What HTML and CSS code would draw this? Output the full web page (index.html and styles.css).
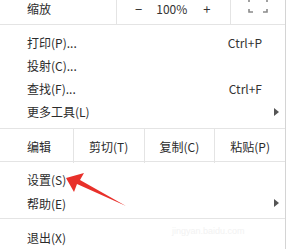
FILE: index.html
```html
<!DOCTYPE html>
<html lang="zh-CN">
<head>
<meta charset="utf-8">
<link rel="stylesheet" href="styles.css">
</head>
<body>
<div class="menu">
  <div class="zoom-row">
    <span class="zoom-label">缩放</span>
    <div class="zoom-ctrl">
      <span class="zbtn minus">−</span>
      <span class="zval">100%</span>
      <span class="zbtn plus">+</span>
    </div>
    <div class="zoom-full">
      <svg width="20" height="16" viewBox="0 0 20 16">
        <path d="M1 4V1h4M15 1h4v3M19 11v3h-4M5 14H1v-3" fill="none" stroke="#8a8a8a" stroke-width="1.6"/>
      </svg>
    </div>
  </div>
  <div class="group top">
    <div class="item"><span>打印(P)...</span><span class="key">Ctrl+P</span></div>
    <div class="item"><span>投射(C)...</span></div>
    <div class="item"><span>查找(F)...</span><span class="key">Ctrl+F</span></div>
    <div class="item"><span>更多工具(L)</span><span class="sub"></span></div>
  </div>
  <div class="edit-row">
    <span class="edit-label">编辑</span>
    <span class="ebtn">剪切(T)</span>
    <span class="ebtn">复制(C)</span>
    <span class="ebtn">粘贴(P)</span>
  </div>
  <div class="group mid">
    <div class="item tall"><span>设置(S)</span></div>
    <div class="item tall"><span>帮助(E)</span><span class="sub"></span></div>
  </div>
  <div class="group bottom">
    <div class="item tall"><span>退出(X)</span></div>
  </div>
  <div class="watermark">jingyan.baidu.com</div>
  <svg class="arrow" width="297" height="249" viewBox="0 0 297 249">
    <polygon points="66,178 84,173 80,180 126,206 77,184 74,192" fill="#e8302a"/>
  </svg>
</div>
</body>
</html>
```
FILE: styles.css
```css
html, body {
  margin: 0;
  padding: 0;
  background: #fff;
}
body {
  width: 297px;
  height: 249px;
  overflow: hidden;
  font-family: "Noto Sans CJK SC", "Noto Sans", sans-serif;
  font-size: 12px;
  color: #2b2b2b;
}
.menu {
  position: relative;
  width: 285px;
  height: 249px;
  border-right: 1px solid #d4d4d4;
}
.zoom-row {
  display: flex;
  height: 24px;
  border-bottom: 1px solid #e4e4e4;
}
.zoom-label {
  width: 89px;
  padding-left: 27px;
  line-height: 18px;
  border-right: 1px solid #e4e4e4;
}
.zoom-ctrl {
  width: 113px;
  display: flex;
  align-items: flex-start;
  border-right: 1px solid #e4e4e4;
  line-height: 18px;
  color: #333;
}
.zbtn {
  font-size: 13px;
}
.minus {
  margin-left: 18px;
}
.zval {
  margin-left: 14px;
  font-size: 12px;
}
.plus {
  margin-left: 16px;
}
.zoom-full {
  padding-left: 17px;
  margin-top: -2px;
}
.group.top {
  padding: 6px 0 5px;
}
.item {
  display: flex;
  align-items: center;
  justify-content: space-between;
  height: 23px;
  padding: 0 23px 0 27px;
}
.item.tall {
  height: 24px;
}
.key {
  color: #333;
}
.sub {
  width: 0;
  height: 0;
  margin-right: -17px;
  border-top: 4px solid transparent;
  border-bottom: 4px solid transparent;
  border-left: 5px solid #555;
}
.edit-row {
  display: flex;
  height: 32px;
  border-top: 1px solid #e4e4e4;
  border-bottom: 1px solid #e4e4e4;
  align-items: center;
}
.edit-row > span {
  padding-top: 3px;
}
.edit-label {
  width: 46px;
  padding-left: 27px;
  height: 100%;
  display: flex;
  align-items: center;
  border-right: 1px solid #e4e4e4;
}
.ebtn {
  width: 70px;
  height: 100%;
  display: flex;
  align-items: center;
  justify-content: center;
  border-right: 1px solid #e4e4e4;
}
.ebtn:last-child {
  border-right: none;
}
.group.mid {
  padding: 5px 0 3px;
  border-bottom: 1px solid #e4e4e4;
}
.group.bottom {
  padding-top: 6px;
}
.watermark {
  position: absolute;
  left: 172px;
  top: 226px;
  font-size: 9px;
  color: #f2f2f2;
  font-family: "Liberation Sans", sans-serif;
}
.arrow {
  position: absolute;
  left: 0;
  top: 0;
  pointer-events: none;
}
```
